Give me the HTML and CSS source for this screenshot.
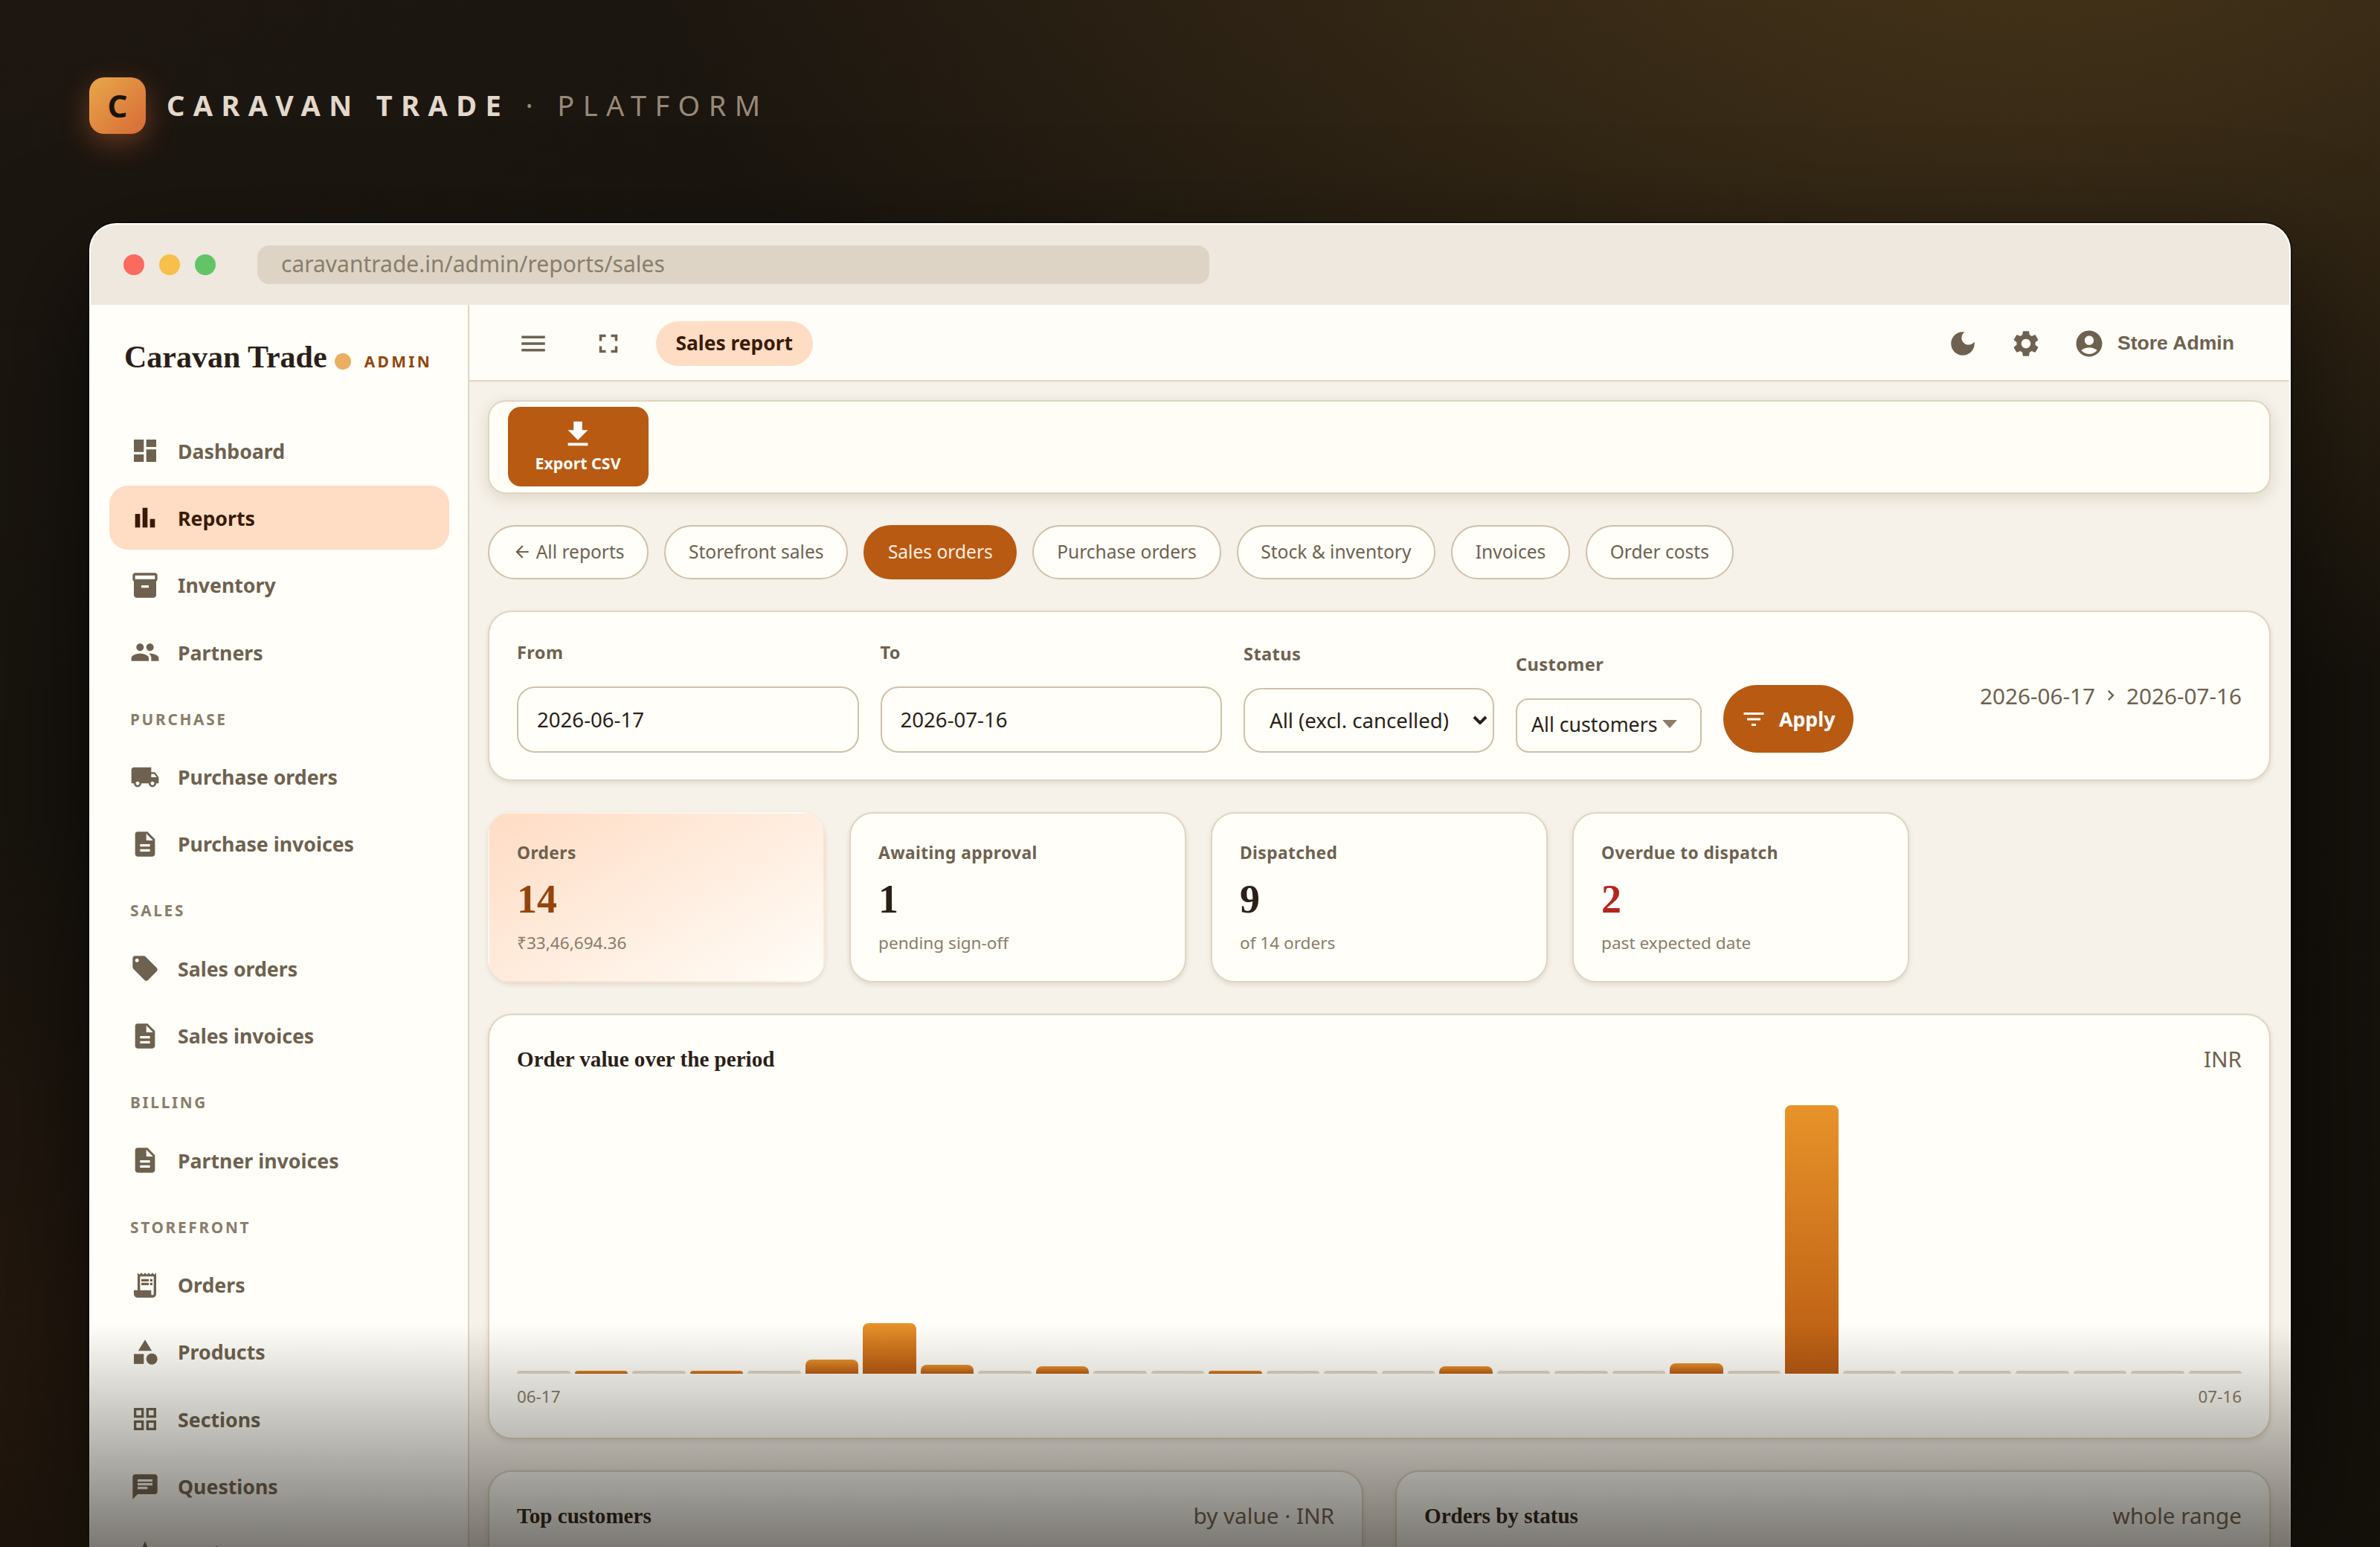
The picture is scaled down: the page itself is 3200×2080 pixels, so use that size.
FILE: index.html
```html
<!DOCTYPE html>
<html lang="en">
<head>
  <meta charset="UTF-8" />
  <meta name="viewport" content="width=device-width, initial-scale=1" />
  <title>Caravan Trade · Platform</title>
  <link rel="stylesheet" href="styles.css">
</head>
<body>
  <!-- icon sprite -->
  <svg class="sprite" xmlns="http://www.w3.org/2000/svg">
    <symbol id="i-dashboard" viewBox="0 0 24 24"><path d="M3 13h8V3H3v10zm0 8h8v-6H3v6zm10 0h8V11h-8v10zm0-18v6h8V3h-8z"/></symbol>
    <symbol id="i-reports" viewBox="0 0 24 24"><path d="M4 9h4v11H4zm12 4h4v7h-4zm-6-9h4v16h-4z"/></symbol>
    <symbol id="i-inventory" viewBox="0 0 24 24"><path d="M20 2H4c-1 0-2 .9-2 2v3.01c0 .72.43 1.34 1 1.69V20c0 1.1 1.1 2 2 2h14c.9 0 2-.9 2-2V8.7c.57-.35 1-.97 1-1.69V4c0-1.1-1-2-2-2zm-5 12H9v-2h6v2zm5-7H4V4h16v3z"/></symbol>
    <symbol id="i-people" viewBox="0 0 24 24"><path d="M16 11c1.66 0 2.99-1.34 2.99-3S17.66 5 16 5c-1.66 0-3 1.34-3 3s1.34 3 3 3zm-8 0c1.66 0 2.99-1.34 2.99-3S9.66 5 8 5C6.34 5 5 6.34 5 8s1.34 3 3 3zm0 2c-2.33 0-7 1.17-7 3.5V19h14v-2.5c0-2.33-4.67-3.5-7-3.5zm8 0c-.29 0-.62.02-.97.05 1.16.84 1.97 1.97 1.97 3.45V19h6v-2.5c0-2.33-4.67-3.5-7-3.5z"/></symbol>
    <symbol id="i-truck" viewBox="0 0 24 24"><path d="M20 8h-3V4H3c-1.1 0-2 .9-2 2v11h2c0 1.66 1.34 3 3 3s3-1.34 3-3h6c0 1.66 1.34 3 3 3s3-1.34 3-3h2v-5l-3-4zM6 18.5c-.83 0-1.5-.67-1.5-1.5s.67-1.5 1.5-1.5 1.5.67 1.5 1.5-.67 1.5-1.5 1.5zm13.5-9l1.96 2.5H17V9.5h2.5zm-1.5 9c-.83 0-1.5-.67-1.5-1.5s.67-1.5 1.5-1.5 1.5.67 1.5 1.5-.67 1.5-1.5 1.5z"/></symbol>
    <symbol id="i-doc" viewBox="0 0 24 24"><path d="M14 2H6c-1.1 0-1.99.9-1.99 2L4 20c0 1.1.89 2 1.99 2H18c1.1 0 2-.9 2-2V8l-6-6zm2 16H8v-2h8v2zm0-4H8v-2h8v2zm-3-5V3.5L18.5 9H13z"/></symbol>
    <symbol id="i-tag" viewBox="0 0 24 24"><path d="M21.41 11.58l-9-9C12.05 2.22 11.55 2 11 2H4c-1.1 0-2 .9-2 2v7c0 .55.22 1.05.59 1.42l9 9c.36.36.86.58 1.41.58.55 0 1.05-.22 1.41-.59l7-7c.37-.36.59-.86.59-1.41 0-.55-.23-1.06-.59-1.42zM5.5 7C4.67 7 4 6.33 4 5.5S4.67 4 5.5 4 7 4.67 7 5.5 6.33 7 5.5 7z"/></symbol>
    <symbol id="i-receipt" viewBox="0 0 24 24"><path d="M19.5 3.5L18 2l-1.5 1.5L15 2l-1.5 1.5L12 2l-1.5 1.5L9 2 7.5 3.5 6 2v14H3v3c0 1.66 1.34 3 3 3h12c1.66 0 3-1.34 3-3V2l-1.5 1.5zM19 19c0 .55-.45 1-1 1s-1-.45-1-1v-3H8V5h11v14z"/><path d="M9 7h6v2H9zm7 0h2v2h-2zm-7 3h6v2H9zm7 0h2v2h-2z"/></symbol>
    <symbol id="i-category" viewBox="0 0 24 24"><path d="M12 2l-5.5 9h11z"/><circle cx="17.5" cy="17.5" r="4.5"/><path d="M3 13.5h8v8H3z"/></symbol>
    <symbol id="i-grid" viewBox="0 0 24 24"><path d="M3 3v8h8V3H3zm6 6H5V5h4v4zm-6 4v8h8v-8H3zm6 6H5v-4h4v4zm4-16v8h8V3h-8zm6 6h-4V5h4v4zm-6 4v8h8v-8h-8zm6 6h-4v-4h4v4z"/></symbol>
    <symbol id="i-chat" viewBox="0 0 24 24"><path d="M20 2H4c-1.1 0-1.99.9-1.99 2L2 22l4-4h14c1.1 0 2-.9 2-2V4c0-1.1-.9-2-2-2zM6 9h12v2H6V9zm8 5H6v-2h8v2zm4-6H6V6h12v2z"/></symbol>
    <symbol id="i-star" viewBox="0 0 24 24"><path d="M12 17.27L18.18 21l-1.64-7.03L22 9.24l-7.19-.61L12 2 9.19 8.63 2 9.24l5.46 4.73L5.82 21z"/></symbol>
    <symbol id="i-menu" viewBox="0 0 24 24"><path d="M3 18h18v-2H3v2zm0-5h18v-2H3v2zm0-7v2h18V6H3z"/></symbol>
    <symbol id="i-full" viewBox="0 0 24 24"><path d="M7 14H5v5h5v-2H7v-3zm-2-4h2V7h3V5H5v5zm12 7h-3v2h5v-5h-2v3zM14 5v2h3v3h2V5h-5z"/></symbol>
    <symbol id="i-moon" viewBox="0 0 24 24"><path d="M12 3c-4.97 0-9 4.03-9 9s4.03 9 9 9 9-4.03 9-9c0-.46-.04-.92-.1-1.36-.98 1.37-2.58 2.26-4.4 2.26-2.98 0-5.4-2.42-5.4-5.4 0-1.81.89-3.42 2.26-4.4-.44-.06-.9-.1-1.36-.1z"/></symbol>
    <symbol id="i-gear" viewBox="0 0 24 24"><path d="M19.14 12.94c.04-.3.06-.61.06-.94 0-.32-.02-.64-.07-.94l2.03-1.58c.18-.14.23-.41.12-.61l-1.92-3.32c-.12-.22-.37-.29-.59-.22l-2.39.96c-.5-.38-1.03-.7-1.62-.94l-.36-2.54c-.04-.24-.24-.41-.48-.41h-3.84c-.24 0-.43.17-.47.41l-.36 2.54c-.59.24-1.13.57-1.62.94l-2.39-.96c-.22-.08-.47 0-.59.22L2.74 8.87c-.12.21-.08.47.12.61l2.03 1.58c-.05.3-.09.63-.09.94s.02.64.07.94l-2.03 1.58c-.18.14-.23.41-.12.61l1.92 3.32c.12.22.37.29.59.22l2.39-.96c.5.38 1.03.7 1.62.94l.36 2.54c.05.24.24.41.48.41h3.84c.24 0 .44-.17.47-.41l.36-2.54c.59-.24 1.13-.56 1.62-.94l2.39.96c.22.08.47 0 .59-.22l1.92-3.32c.12-.22.07-.47-.12-.61l-2.01-1.58zM12 15.6c-1.98 0-3.6-1.62-3.6-3.6s1.62-3.6 3.6-3.6 3.6 1.62 3.6 3.6-1.62 3.6-3.6 3.6z"/></symbol>
    <symbol id="i-account" viewBox="0 0 24 24"><path d="M12 2C6.48 2 2 6.48 2 12s4.48 10 10 10 10-4.48 10-10S17.52 2 12 2zm0 4c1.93 0 3.5 1.57 3.5 3.5S13.93 13 12 13s-3.5-1.57-3.5-3.5S10.07 6 12 6zm0 14c-2.03 0-4.43-.82-6.14-2.88C7.55 15.8 9.68 15 12 15s4.45.8 6.14 2.12C16.43 19.18 14.03 20 12 20z"/></symbol>
    <symbol id="i-download" viewBox="0 0 24 24"><path d="M19 9h-4V3H9v6H5l7 7 7-7zM5 18v2h14v-2H5z"/></symbol>
    <symbol id="i-back" viewBox="0 0 24 24"><path d="M20 11H7.83l5.59-5.59L12 4l-8 8 8 8 1.41-1.41L7.83 13H20v-2z"/></symbol>
    <symbol id="i-filter" viewBox="0 0 24 24"><path d="M10 18h4v-2h-4v2zM3 6v2h18V6H3zm3 7h12v-2H6v2z"/></symbol>
    <symbol id="i-chevron" viewBox="0 0 24 24"><path d="M10 6L8.59 7.41 13.17 12l-4.58 4.59L10 18l6-6z"/></symbol>
  </svg>

  <header class="brand">
    <div class="brand-mark">C</div>
    <div class="brand-name">CARAVAN TRADE <span>· PLATFORM</span></div>
  </header>

  <div class="window">
    <div class="titlebar">
      <i class="dot red"></i><i class="dot yellow"></i><i class="dot green"></i>
      <div class="url">caravantrade.in/admin/reports/sales</div>
    </div>

    <div class="app">
      <aside class="sidebar">
        <div class="logo">Caravan Trade<i></i><span>ADMIN</span></div>
        <nav>
          <a class="item"><svg><use href="#i-dashboard"/></svg>Dashboard</a>
          <a class="item active"><svg><use href="#i-reports"/></svg>Reports</a>
          <a class="item"><svg><use href="#i-inventory"/></svg>Inventory</a>
          <a class="item"><svg><use href="#i-people"/></svg>Partners</a>
          <div class="group">PURCHASE</div>
          <a class="item"><svg><use href="#i-truck"/></svg>Purchase orders</a>
          <a class="item"><svg><use href="#i-doc"/></svg>Purchase invoices</a>
          <div class="group">SALES</div>
          <a class="item"><svg><use href="#i-tag"/></svg>Sales orders</a>
          <a class="item"><svg><use href="#i-doc"/></svg>Sales invoices</a>
          <div class="group">BILLING</div>
          <a class="item"><svg><use href="#i-doc"/></svg>Partner invoices</a>
          <div class="group">STOREFRONT</div>
          <a class="item"><svg><use href="#i-receipt"/></svg>Orders</a>
          <a class="item"><svg><use href="#i-category"/></svg>Products</a>
          <a class="item"><svg><use href="#i-grid"/></svg>Sections</a>
          <a class="item"><svg><use href="#i-chat"/></svg>Questions</a>
          <a class="item"><svg><use href="#i-star"/></svg>Reviews</a>
        </nav>
      </aside>

      <div class="main">
        <div class="topbar">
          <svg class="menu"><use href="#i-menu"/></svg>
          <svg class="full"><use href="#i-full"/></svg>
          <div class="crumb">Sales report</div>
          <div class="user">
            <svg><use href="#i-moon"/></svg>
            <svg><use href="#i-gear"/></svg>
            <svg class="avatar"><use href="#i-account"/></svg>
            <span>Store Admin</span>
          </div>
        </div>

        <div class="content">
          <div class="toolbar">
            <div class="export"><svg><use href="#i-download"/></svg>Export CSV</div>
          </div>

          <div class="tabs">
            <a class="tab"><svg><use href="#i-back"/></svg>All reports</a>
            <a class="tab">Storefront sales</a>
            <a class="tab on">Sales orders</a>
            <a class="tab">Purchase orders</a>
            <a class="tab">Stock &amp; inventory</a>
            <a class="tab">Invoices</a>
            <a class="tab">Order costs</a>
          </div>

          <div class="card filters">
            <div class="field date"><label>From</label><div class="input">2026-06-17</div></div>
            <div class="field date"><label>To</label><div class="input">2026-07-16</div></div>
            <div class="field status"><label>Status</label>
              <div class="input">All (excl. cancelled)<svg viewBox="0 0 20 12"><path d="M2 2l8 8 8-8"/></svg></div>
            </div>
            <div class="field customer"><label>Customer</label><div class="input">All customers<i></i></div></div>
            <div class="apply"><svg><use href="#i-filter"/></svg>Apply</div>
            <div class="range">2026-06-17<svg><use href="#i-chevron"/></svg>2026-07-16</div>
          </div>

          <div class="kpis">
            <div class="card kpi hero"><h4>Orders</h4><strong>14</strong><p>₹33,46,694.36</p></div>
            <div class="card kpi"><h4>Awaiting approval</h4><strong>1</strong><p>pending sign-off</p></div>
            <div class="card kpi"><h4>Dispatched</h4><strong>9</strong><p>of 14 orders</p></div>
            <div class="card kpi late"><h4>Overdue to dispatch</h4><strong>2</strong><p>past expected date</p></div>
          </div>

          <div class="card chart">
            <div class="head"><h3>Order value over the period</h3><span>INR</span></div>
            <div class="bars" id="bars"></div>
            <div class="axis"><span>06-17</span><span>07-16</span></div>
          </div>

          <div class="split">
            <div class="card"><div class="head"><h3>Top customers</h3><span>by value · INR</span></div></div>
            <div class="card"><div class="head"><h3>Orders by status</h3><span>whole range</span></div></div>
          </div>
        </div>
      </div>
    </div>
  </div>
  <div class="fade"></div>

<script>
  // bar heights in px, one per day
  const days = [0, 4, 0, 4, 0, 19, 68, 12, 0, 10, 0, 0, 4, 0, 0, 0, 10, 0, 0, 0, 14, 0, 361, 0, 0, 0, 0, 0, 0, 0];
  document.getElementById('bars').innerHTML = days
    .map(h => `<i class="${h ? 'bar' : 'bar empty'}" style="height:${h || 4}px"></i>`)
    .join('');
</script>
</body>
</html>
```

FILE: styles.css
```css
* {
  box-sizing: border-box;
}
body {
  margin: 0;
  width: 3200px;
  height: 2080px;
  overflow: hidden;
  position: relative;
  font-family: 'Noto Sans', sans-serif;
  color: #2b1f17;
  background:
    radial-gradient(ellipse 1900px 1100px at 86% -8%, rgba(224, 160, 64, 0.24), rgba(224, 160, 64, 0) 100%),
    radial-gradient(ellipse 1300px 1000px at 0% 100%, rgba(196, 90, 40, 0.1), rgba(196, 90, 40, 0) 100%),
    linear-gradient(160deg, #1e1711 0%, #18140e 30%, #14100a 100%);
}
h3, h4, p {
  margin: 0;
}
svg {
  fill: currentColor;
  flex: none;
}
.sprite {
  position: absolute;
  width: 0;
  height: 0;
}

.brand {
  display: flex;
  align-items: center;
  gap: 28px;
  padding: 104px 120px 0;
}
.brand-mark {
  width: 76px;
  height: 76px;
  border-radius: 20px;
  background: linear-gradient(135deg, #e8a848, #d86a38);
  box-shadow: 0 12px 36px rgba(216, 106, 56, 0.4);
  color: #1a140d;
  font-size: 42px;
  font-weight: 700;
  line-height: 76px;
  text-align: center;
}
.brand-name {
  height: 54px;
  font-size: 38px;
  font-weight: 700;
  line-height: 52px;
  letter-spacing: 11.4px;
  color: #e2d8cb;
  white-space: nowrap;
}
.brand-name span {
  font-weight: 400;
  color: #978a78;
}

.window {
  margin: 120px 120px 0;
  height: 1780px;
  border: 2px solid #fff;
  border-bottom: 0;
  border-radius: 36px 36px 0 0;
  overflow: hidden;
  background: #fffef9;
  box-shadow: 0 0 0 2px rgba(0, 0, 0, 0.35), 0 60px 160px rgba(0, 0, 0, 0.6);
}
.titlebar {
  height: 108px;
  display: flex;
  align-items: center;
  gap: 20px;
  padding: 0 44px;
  background: #efe8de;
}
.dot {
  width: 28px;
  height: 28px;
  border-radius: 50%;
}
.red { background: #fb6a5f; }
.yellow { background: #f7bf4b; }
.green { background: #62c466; }
.url {
  width: 1280px;
  height: 52px;
  margin-left: 36px;
  padding: 0 32px;
  border-radius: 16px;
  background: #ddd4c5;
  color: #8a7d6a;
  font-size: 30px;
  line-height: 49px;
}
.app {
  display: flex;
  height: 1670px;
}

/* sidebar */
.sidebar {
  width: 509px;
  flex: none;
  padding: 0 25px;
  border-right: 2px solid #e0d5c3;
  color: #6e614f;
}
.logo {
  display: flex;
  align-items: baseline;
  height: 153px;
  padding: 46px 0 0 20px;
  font-family: 'Liberation Serif', serif;
  font-size: 42px;
  font-weight: 700;
  color: #2b1f17;
  white-space: nowrap;
}
.logo i {
  width: 22px;
  height: 22px;
  margin: 0 18px 0 10px;
  border-radius: 50%;
  background: #ebae62;
  transform: translateY(3px);
}
.logo span {
  font-family: 'Noto Sans', sans-serif;
  font-size: 21px;
  letter-spacing: 3.3px;
  color: #94450c;
}
.item {
  display: flex;
  align-items: center;
  gap: 24px;
  height: 86px;
  margin-bottom: 4.4px;
  padding-left: 28px;
  border-radius: 25px;
  font-size: 26.7px;
  font-weight: 700;
}
.item svg {
  width: 40px;
  height: 40px;
}
.item.active {
  background: #ffdcc4;
  color: #3a1a04;
}
.group {
  height: 77px;
  padding: 28px 0 0 28px;
  font-size: 20.8px;
  font-weight: 700;
  line-height: 29px;
  letter-spacing: 2.7px;
  color: #8a7d6a;
}

/* top bar */
.main {
  flex: 1;
  background: #f6f1e9;
}
.topbar {
  display: flex;
  align-items: center;
  height: 103px;
  padding: 2px 74px 0 65px;
  border-bottom: 2px solid #e0d5c3;
  background: #fffdf8;
  color: #6e614f;
}
.topbar svg {
  width: 42px;
  height: 42px;
}
.topbar .full {
  margin: 0 43px 0 59px;
}
.crumb {
  height: 60px;
  padding: 0 26.5px;
  border-radius: 30px;
  background: #ffdcc4;
  color: #3a1a04;
  font-size: 26.4px;
  font-weight: 700;
  line-height: 58px;
}
.user {
  display: flex;
  align-items: center;
  margin-left: auto;
  font: 700 26.6px 'Liberation Sans', sans-serif;
}
.user svg {
  margin-right: 43px;
}
.user .avatar {
  margin-right: 17px;
}

/* content */
.content {
  display: flex;
  flex-direction: column;
  gap: 42px;
  padding: 25px;
}
.card {
  border: 2px solid #e0d5c3;
  border-radius: 32px;
  background: #fffef9;
  box-shadow: 0 3px 6px rgba(80, 60, 20, 0.12);
}
.toolbar {
  height: 126px;
  padding: 7px 24.5px;
  border: 2px solid #e0d5c3;
  border-radius: 24px;
  background: #fffdf6;
  box-shadow: 0 6px 20px rgba(80, 60, 20, 0.15);
}
.export {
  display: flex;
  flex-direction: column;
  align-items: center;
  width: 189px;
  height: 107px;
  padding-top: 14px;
  border-radius: 17px;
  background: #b85a12;
  color: #fff;
  font-size: 21.4px;
  font-weight: 700;
  line-height: 32px;
}
.export svg {
  width: 46px;
  height: 46px;
}
.tabs {
  display: flex;
  gap: 21px;
}
.tab {
  display: flex;
  align-items: center;
  height: 73px;
  padding: 0 30.7px 2px;
  border: 2px solid #cfc0a8;
  border-radius: 37px;
  background: #fffef9;
  color: #6e614f;
  font-size: 24.55px;
}
.tab svg {
  width: 26px;
  height: 26px;
  margin-right: 6px;
}
.tab.on {
  border-color: #b85a12;
  background: #b85a12;
  color: #ffeee2;
}

.filters {
  display: flex;
  align-items: flex-end;
  gap: 29px;
  height: 229px;
  padding: 0 37px 36px;
}
.field label {
  display: block;
  margin-bottom: 29px;
  color: #6e614f;
  font-size: 23.6px;
  font-weight: 700;
  line-height: 33px;
  letter-spacing: 0.4px;
}
.input {
  display: flex;
  align-items: center;
  height: 89px;
  padding: 0 25px 2px;
  border: 2px solid #cfc0a8;
  border-radius: 24px;
  font-size: 27.6px;
  white-space: nowrap;
}
.date .input { width: 459.5px; }
.status .input {
  width: 337px;
  height: 87px;
  padding: 0 7px 2px 33px;
}
.status svg {
  width: 20px;
  height: 12px;
  margin-left: auto;
  fill: none;
  stroke: #2b1f17;
  stroke-width: 4;
}
.customer .input {
  width: 250px;
  height: 73px;
  padding: 0 19px 4px;
  border-radius: 17px;
  font-size: 26.7px;
}
.customer i {
  margin-left: 7px;
  border: 10.5px solid transparent;
  border-top: 11px solid #8a7d6a;
  border-bottom: 0;
}
.apply {
  display: flex;
  align-items: center;
  gap: 16px;
  width: 175px;
  height: 91px;
  padding-left: 23px;
  border-radius: 46px;
  background: #b85a12;
  color: #fff;
  font-size: 26.7px;
  font-weight: 700;
}
.apply svg {
  width: 36px;
  height: 36px;
}
.range {
  display: flex;
  align-items: center;
  align-self: center;
  margin: 35px 0 0 auto;
  color: #6e614f;
  font-size: 29.7px;
}
.range svg {
  width: 28px;
  height: 28px;
  margin: 0 7px;
}

.kpis {
  display: grid;
  grid-template-columns: repeat(4, 452.5px);
  gap: 33.5px;
}
.kpi {
  height: 229px;
  padding: 36px 37px 0;
}
.kpi h4 {
  color: #6e614f;
  font-size: 22.7px;
  font-weight: 700;
  line-height: 33px;
  letter-spacing: 0.45px;
}
.kpi strong {
  display: block;
  font: 700 54px/60px 'Liberation Serif', serif;
  margin: 16px 0 13px;
}
.kpi p {
  color: #8a7d6a;
  font-size: 22.6px;
  line-height: 32px;
}
.hero {
  border-color: transparent;
  background: linear-gradient(150deg, #ffdcc4, #fffdf8);
}
.hero strong { color: #94450c; }
.late strong { color: #b3261e; }

.head {
  display: flex;
  justify-content: space-between;
  align-items: center;
  padding: 37.5px 37px 0;
}
.head h3 {
  font: 700 29.1px/42px 'Liberation Serif', serif;
}
.head span {
  color: #6e614f;
  font-size: 29.7px;
  line-height: 42px;
}
.chart {
  height: 572px;
}
.bars {
  display: flex;
  align-items: flex-end;
  gap: 6px;
  height: 402.5px;
  margin: 0 36.5px 0 37px;
}
.bar {
  flex: 1;
  border-radius: 8px 8px 0 0;
  background: linear-gradient(#e8932a, #b85a12);
}
.bar.empty {
  background: #e0d5c3;
}
.axis {
  display: flex;
  justify-content: space-between;
  margin: 15px 37px;
  color: #8a7d6a;
  font-size: 22.4px;
}
.split {
  display: grid;
  grid-template-columns: 1fr 1fr;
  gap: 43px;
}
.split .card {
  height: 500px;
}

/* bottom vignette over everything */
.fade {
  position: absolute;
  left: 0;
  right: 0;
  bottom: 0;
  height: 300px;
  background: linear-gradient(rgba(20, 16, 10, 0), rgba(20, 16, 10, 0.56));
}
```
